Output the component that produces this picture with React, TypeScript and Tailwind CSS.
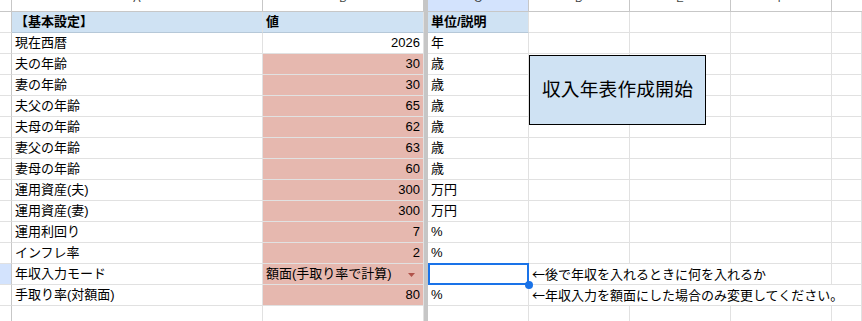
import React from 'react';

type Row = {
  a: string;
  b: string;
  c: string;
  header?: boolean;
  pink?: boolean;
  dropdown?: boolean;
  note?: string;
};

const rows: Row[] = [
  { a: '【基本設定】', b: '値', c: '単位/説明', header: true },
  { a: '現在西暦', b: '2026', c: '年' },
  { a: '夫の年齢', b: '30', c: '歳', pink: true },
  { a: '妻の年齢', b: '30', c: '歳', pink: true },
  { a: '夫父の年齢', b: '65', c: '歳', pink: true },
  { a: '夫母の年齢', b: '62', c: '歳', pink: true },
  { a: '妻父の年齢', b: '63', c: '歳', pink: true },
  { a: '妻母の年齢', b: '60', c: '歳', pink: true },
  { a: '運用資産(夫)', b: '300', c: '万円', pink: true },
  { a: '運用資産(妻)', b: '300', c: '万円', pink: true },
  { a: '運用利回り', b: '7', c: '%', pink: true },
  { a: 'インフレ率', b: '2', c: '%', pink: true },
  { a: '年収入力モード', b: '額面(手取り率で計算)', c: '', pink: true, dropdown: true, note: '←後で年収を入れるときに何を入れるか' },
  { a: '手取り率(対額面)', b: '80', c: '%', pink: true, note: '←年収入力を額面にした場合のみ変更してください。' },
  { a: '', b: '', c: '' },
];

const grid = 'border-r border-b border-[#e1e1e1]';
const cjk = { fontFamily: '"Noto Sans CJK JP", sans-serif' };

const ColLetter = ({ label, w, active }: { label: string; w: string; active?: boolean }) => (
  <div className={`${w} h-full shrink-0 overflow-hidden border-r border-[#c7c7c7] flex justify-center ${active ? 'bg-[#d3e3fd]' : 'bg-white'}`}>
    <span className="block -mt-[8px] leading-[12px] text-[11px] text-[#444746]">{label}</span>
  </div>
);

export default function App() {
  return (
    <div
      className="relative w-[862px] h-[321px] overflow-hidden bg-white text-[13px] text-black"
      style={{ fontFamily: '"Liberation Sans", Arial, "Noto Sans CJK JP", sans-serif' }}
    >
      {/* column letters, cut off at the top like the sheet scrolled */}
      <div className="flex h-[12px] border-b border-[#c7c7c7]">
        <div className="w-[12px] shrink-0 border-r border-[#c7c7c7]" />
        <ColLetter label="A" w="w-[251px]" />
        <ColLetter label="B" w="w-[161px]" />
        <div className="w-[4px] shrink-0 bg-[#c6c6c6]" />
        <ColLetter label="C" w="w-[101px]" active />
        <ColLetter label="D" w="w-[101px]" />
        <ColLetter label="E" w="w-[101px]" />
        <ColLetter label="F" w="w-[101px]" />
        <div className="flex-1" />
      </div>

      {rows.map((r, i) => {
        const selected = i === 12;
        return (
          <div key={i} className="flex h-[21px] leading-[20px]">
            <div className={`w-[12px] shrink-0 border-r border-b border-r-[#c7c7c7] border-b-[#e1e1e1] ${selected ? 'bg-[#d3e3fd]' : ''}`} />
            <div className={`w-[251px] shrink-0 pl-[3px] whitespace-nowrap ${grid} ${r.header ? 'bg-[#cfe2f3] font-bold border-b-[#b6c8d8]' : ''}`}>
              {r.a}
            </div>
            <div
              className={`w-[161px] shrink-0 whitespace-nowrap flex ${grid} ${
                r.header
                  ? 'bg-[#cfe2f3] font-bold border-b-[#b6c8d8] pl-[3px]'
                  : r.pink
                  ? 'bg-[#e6b8af] border-[#d6a79f] justify-end pr-[3px]'
                  : 'justify-end pr-[3px]'
              } ${r.dropdown ? 'justify-between! pl-[3px] pr-[8px]! items-center' : ''}`}
            >
              <span>{r.b}</span>
              {r.dropdown && (
                <svg width="7" height="4" viewBox="0 0 7 4" className="mt-[1px]">
                  <path d="M0 0h7L3.5 4z" fill="#b0524a" />
                </svg>
              )}
            </div>
            <div className="w-[4px] shrink-0 bg-[#c6c6c6]" />
            <div className={`relative w-[101px] shrink-0 pl-[3px] whitespace-nowrap ${grid} ${r.header ? 'bg-[#cfe2f3] font-bold border-b-[#b6c8d8]' : ''}`}>
              {r.c}
              {selected && (
                <>
                  <div className="absolute left-0 top-[-1px] w-[101px] h-[22px] border-2 border-[#1a73e8]" />
                  <div className="absolute left-[97px] top-[17px] w-[8px] h-[8px] rounded-full bg-[#1a73e8] z-10" />
                </>
              )}
            </div>
            {i === 12 ? (
              <>
                <div className={`w-[303px] shrink-0 pl-[3px] whitespace-nowrap ${grid}`} style={cjk}>{r.note}</div>
                <div className={`flex-1 ${grid}`} />
              </>
            ) : i === 13 ? (
              <div className={`flex-1 pl-[3px] whitespace-nowrap ${grid}`} style={cjk}>{r.note}</div>
            ) : (
              <>
                <div className={`w-[101px] shrink-0 ${grid}`} />
                <div className={`w-[101px] shrink-0 ${grid}`} />
                <div className={`w-[101px] shrink-0 ${grid}`} />
                <div className={`flex-1 ${grid}`} />
              </>
            )}
          </div>
        );
      })}

      {/* drawing: button */}
      <div className="absolute left-[529px] top-[55px] w-[177px] h-[70px] border border-black bg-[#cfe2f3] flex items-center justify-center text-[18.7px] tracking-[0.2px]">
        収入年表作成開始
      </div>
    </div>
  );
}
